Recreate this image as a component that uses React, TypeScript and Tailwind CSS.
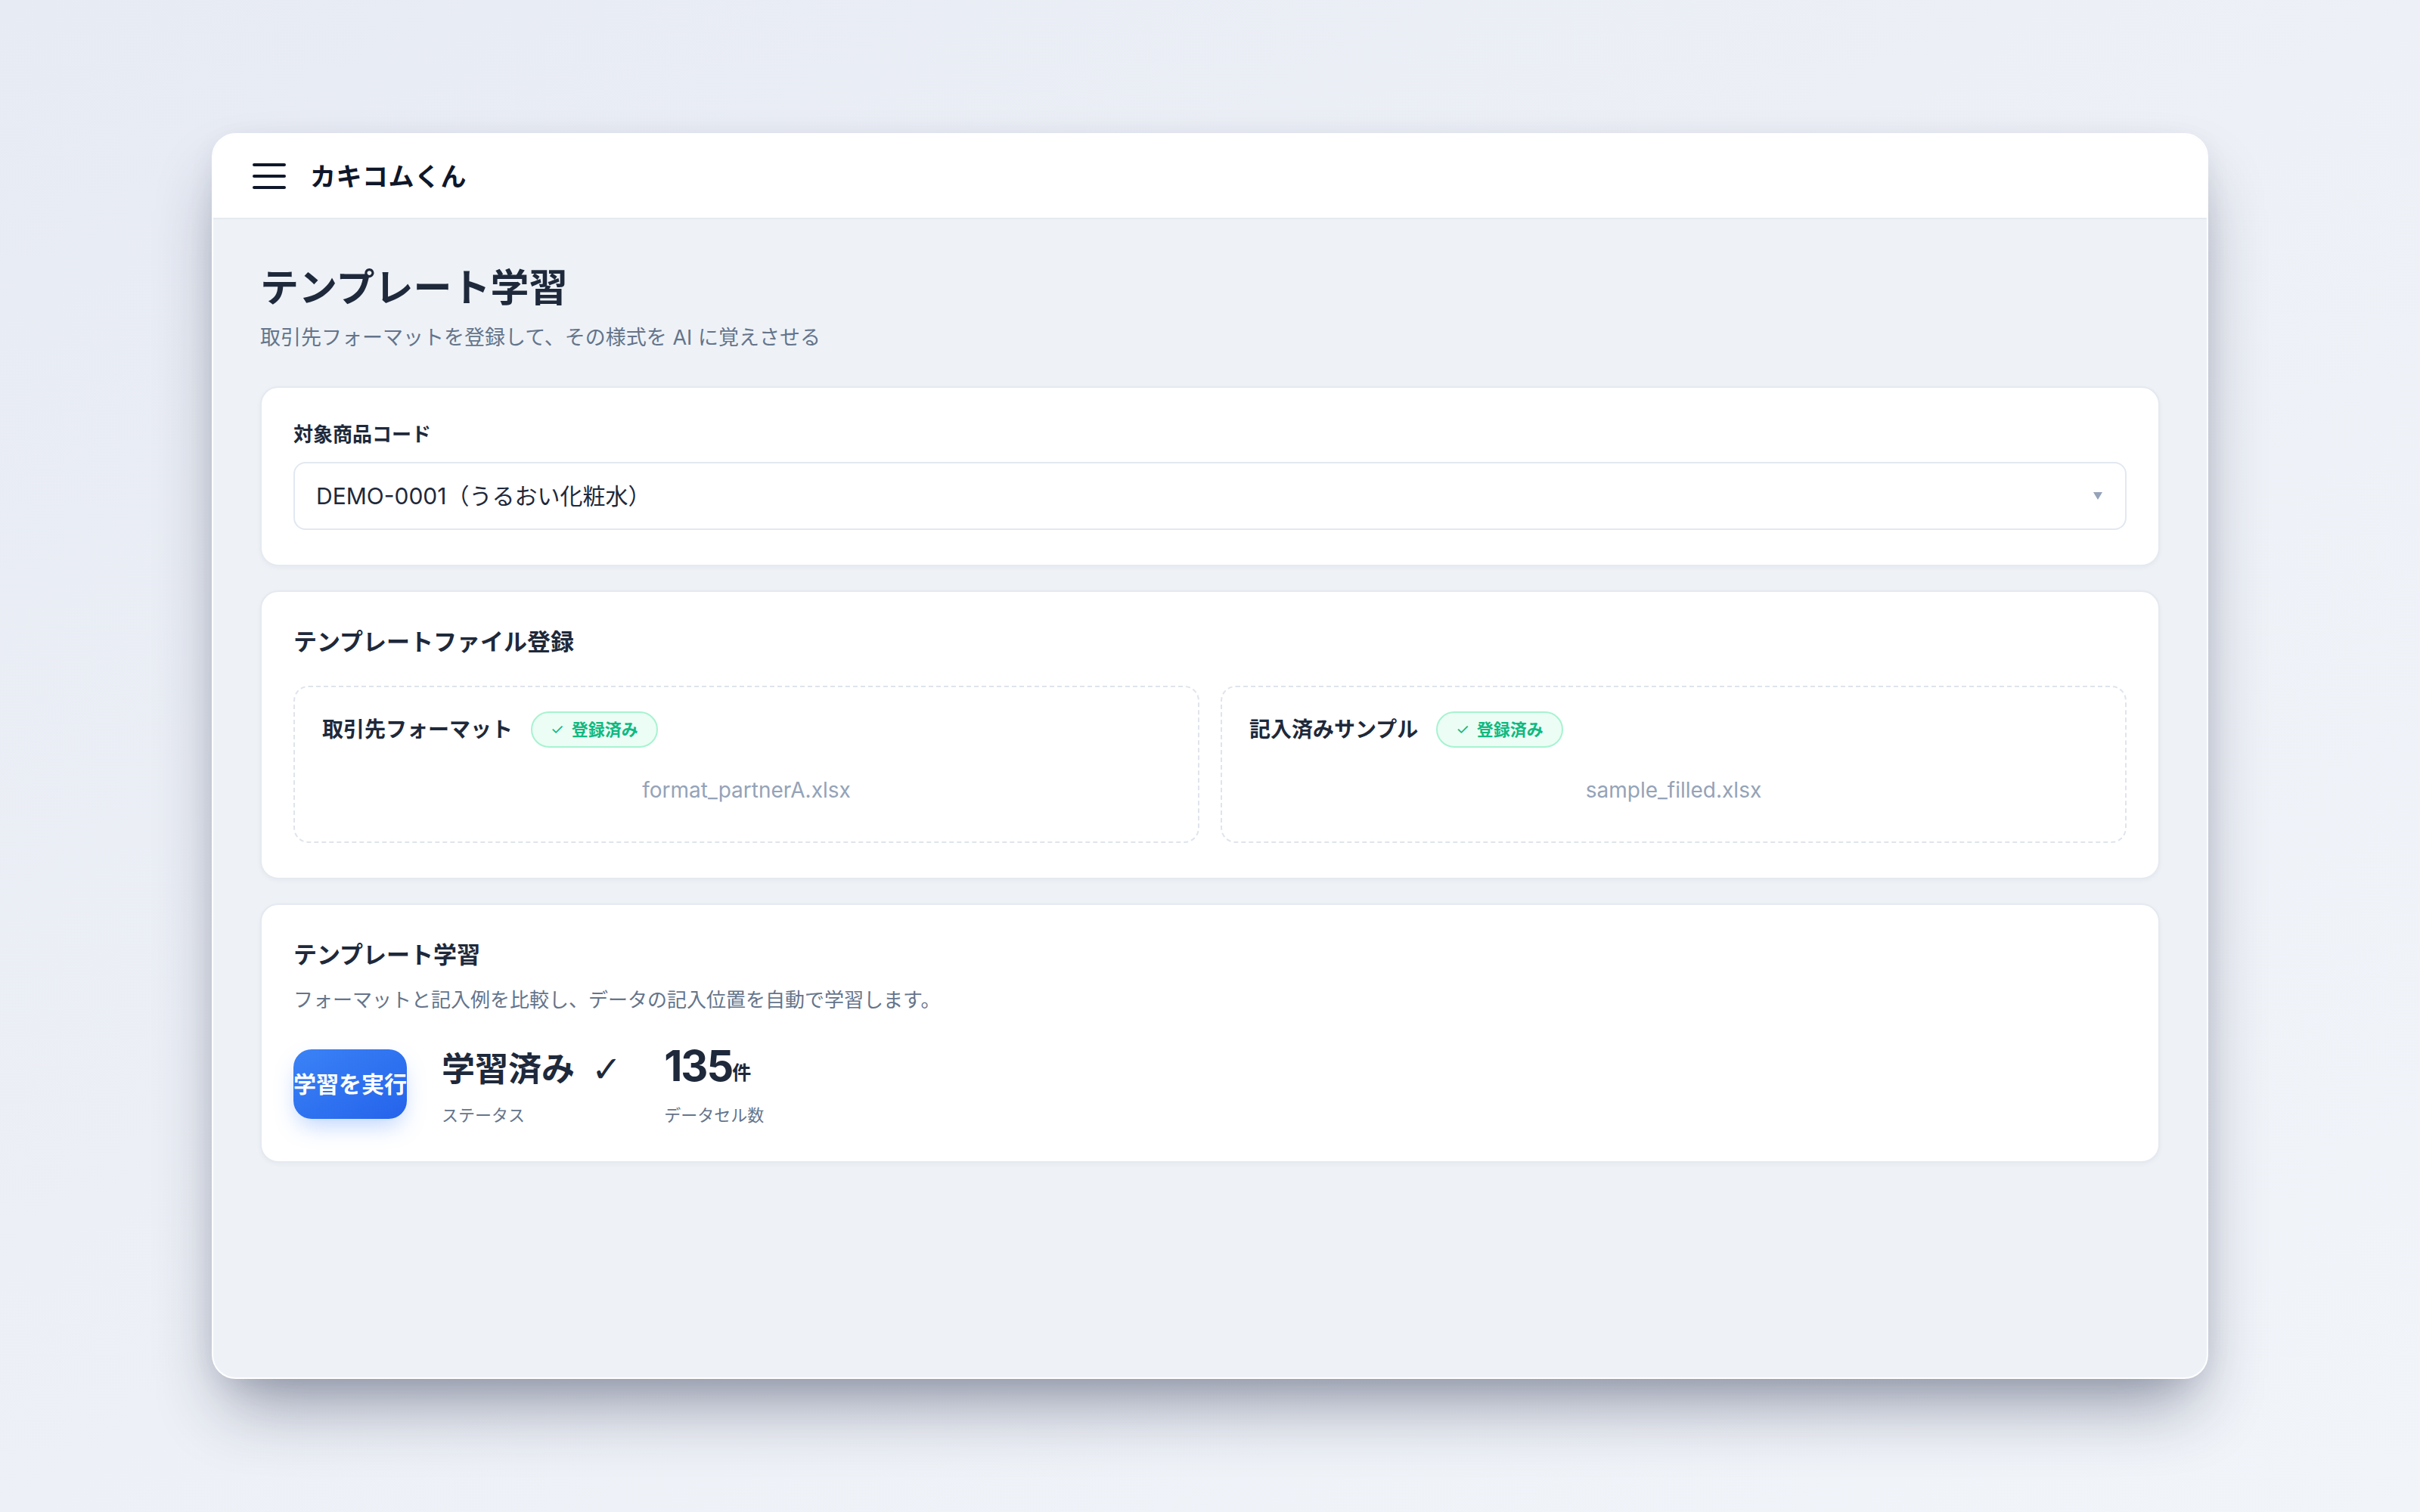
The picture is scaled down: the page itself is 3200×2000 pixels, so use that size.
import React from "react";

const FONT = { fontFamily: 'Inter, "Noto Sans CJK JP", sans-serif' };

function Badge() {
  return (
    <span className="inline-flex h-[48px] items-center gap-[10px] rounded-full border-2 border-[#a7f3d0] bg-[#ecfdf5] px-[24px] text-[22px] font-bold text-[#10b981]">
      <span className="text-[20px] font-normal">✓</span>
      <span>登録済み</span>
    </span>
  );
}

function FileBox({ label, file }: { label: string; file: string }) {
  return (
    <div className="flex flex-col rounded-[20px] border-2 border-dashed border-[#dfe4ec] px-[36px] pb-[44px] pt-[32px]">
      <div className="flex h-[48px] items-center gap-[24px]">
        <span className="text-[28px] font-bold text-[#1e293b]">{label}</span>
        <Badge />
      </div>
      <div className="mt-[32px] text-center text-[28px] leading-[48px] text-[#94a3b8]">{file}</div>
    </div>
  );
}

export default function App() {
  return (
    <div
      style={FONT}
      className="flex h-[2000px] w-[3200px] items-center justify-center bg-gradient-to-br from-[#e7ebf4] via-[#edf0f6] to-[#f1f4f9]"
    >
      <div className="flex h-[1648px] w-[2640px] flex-col overflow-hidden rounded-[32px] border-2 border-white bg-[#eef2f7] shadow-[0_50px_90px_-20px_rgba(30,41,70,0.45),0_10px_40px_-10px_rgba(30,41,70,0.12)]">
        {/* Header */}
        <header className="flex h-[112px] shrink-0 items-center gap-[32px] border-b-2 border-[#e5e9f0] bg-white pl-[52px]">
          <div className="flex w-[44px] flex-col gap-[11px]">
            <span className="h-[4px] w-[44px] rounded-full bg-[#0f172a]" />
            <span className="h-[4px] w-[44px] rounded-full bg-[#0f172a]" />
            <span className="h-[4px] w-[44px] rounded-full bg-[#0f172a]" />
          </div>
          <span className="text-[34px] font-bold tracking-[0.5px] text-[#0f172a]">カキコムくん</span>
        </header>

        {/* Content */}
        <main className="flex flex-col px-[62px] pt-[59px]">
          <h1 className="text-[51px] font-bold leading-[64px] text-[#1e293b]">テンプレート学習</h1>
          <p className="mt-[16px] text-[27px] leading-[36px] text-[#64748b]">
            取引先フォーマットを登録して、その様式を AI に覚えさせる
          </p>

          <div className="mt-[46px] flex flex-col gap-[32px]">
            {/* Card 1 */}
            <section className="rounded-[24px] border-2 border-[#e5e9f0] bg-white px-[42px] pb-[46px] pt-[42px] shadow-[0_2px_6px_rgba(15,23,42,0.04)]">
              <div className="text-[26px] font-bold leading-[40px] text-[#1e293b]">対象商品コード</div>
              <div className="mt-[16px] flex h-[90px] items-center justify-between rounded-[16px] border-2 border-[#e2e8f0] bg-white pl-[28px] pr-[30px]">
                <span className="text-[30px] text-[#1e293b]">DEMO-0001（うるおい化粧水）</span>
                <svg width="12" height="10" viewBox="0 0 12 10">
                  <path d="M0 0 H12 L6 10 Z" fill="#94a3b8" />
                </svg>
              </div>
            </section>

            {/* Card 2 */}
            <section className="rounded-[24px] border-2 border-[#e5e9f0] bg-white px-[42px] pb-[46px] pt-[42px] shadow-[0_2px_6px_rgba(15,23,42,0.04)]">
              <h2 className="text-[31px] font-bold leading-[48px] text-[#1e293b]">テンプレートファイル登録</h2>
              <div className="mt-[34px] grid grid-cols-2 gap-[28px]">
                <FileBox label="取引先フォーマット" file="format_partnerA.xlsx" />
                <FileBox label="記入済みサンプル" file="sample_filled.xlsx" />
              </div>
            </section>

            {/* Card 3 */}
            <section className="rounded-[24px] border-2 border-[#e5e9f0] bg-white px-[42px] pb-[46px] pt-[42px] shadow-[0_2px_6px_rgba(15,23,42,0.04)]">
              <h2 className="text-[31px] font-bold leading-[48px] text-[#1e293b]">テンプレート学習</h2>
              <p className="mt-[18px] text-[26px] leading-[36px] text-[#64748b]">
                フォーマットと記入例を比較し、データの記入位置を自動で学習します。
              </p>
              <div className="mt-[47px] flex items-center">
                <button className="mb-[10px] flex h-[92px] w-[150px] items-center justify-center whitespace-nowrap rounded-[24px] bg-gradient-to-br from-[#3b82f6] to-[#2563eb] text-[30px] font-bold text-white shadow-[0_14px_30px_-6px_rgba(59,130,246,0.35)]">
                  学習を実行
                </button>
                <div className="ml-[46px] flex flex-col">
                  <div className="flex h-[52px] items-center text-[44px] font-bold text-[#1e293b]">
                    学習済み
                    <span className="ml-[22px] text-[48px] font-normal" style={{ fontFamily: '"DejaVu Sans", sans-serif' }}>
                      ✓
                    </span>
                  </div>
                  <div className="mt-[20px] text-[22px] leading-[30px] text-[#64748b]">ステータス</div>
                </div>
                <div className="ml-[56px] flex flex-col">
                  <div className="flex h-[52px] items-end pb-[2px] font-bold text-[#1e293b]">
                    <span className="text-[56px] leading-[56px] tracking-[-2px]">135</span>
                    <span className="mb-[4px] text-[25px] leading-[30px]">件</span>
                  </div>
                  <div className="mt-[20px] text-[22px] leading-[30px] text-[#64748b]">データセル数</div>
                </div>
              </div>
            </section>
          </div>
        </main>
      </div>
    </div>
  );
}
